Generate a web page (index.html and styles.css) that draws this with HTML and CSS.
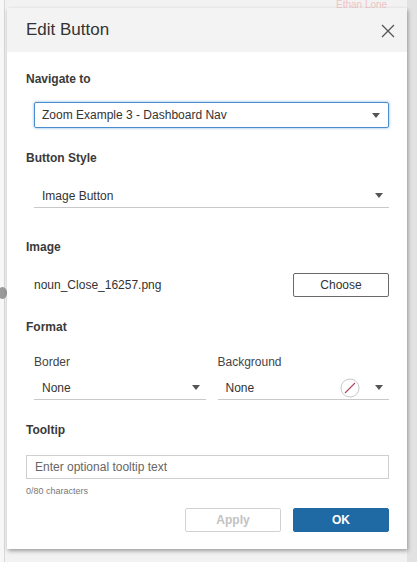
FILE: index.html
```html
<!DOCTYPE html>
<html lang="en">
<head>
    <meta charset="UTF-8">
    <meta name="viewport" content="width=device-width, initial-scale=1.0">
    <title>Edit Button</title>
    <link rel="stylesheet" href="styles.css">
</head>
<body>

<div class="backdrop">
    <span class="behind-name">Ethan Lone</span>
    <span class="behind-knob"></span>
</div>

<div class="dialog">
    <div class="dialog-header">
        <h1>Edit Button</h1>
        <svg class="close" width="14" height="14" viewBox="0 0 14 14">
            <path d="M1 1 L13 13 M13 1 L1 13" stroke="#555" stroke-width="1.3" fill="none"/>
        </svg>
    </div>

    <div class="dialog-body">
        <div class="label label-first">Navigate to</div>
        <div class="select boxed">
            <span>Zoom Example 3 - Dashboard Nav</span>
            <span class="caret"></span>
        </div>

        <div class="label">Button Style</div>
        <div class="select lined indent">
            <span>Image Button</span>
            <span class="caret"></span>
        </div>

        <div class="label label-image">Image</div>
        <div class="image-row">
            <span>noun_Close_16257.png</span>
            <button class="btn btn-outline">Choose</button>
        </div>

        <div class="label">Format</div>
        <div class="format-row">
            <div class="format-col">
                <div class="sublabel">Border</div>
                <div class="select lined">
                    <span>None</span>
                    <span class="caret"></span>
                </div>
            </div>
            <div class="format-col">
                <div class="sublabel">Background</div>
                <div class="select lined">
                    <span>None</span>
                    <span class="swatch">
                        <svg width="20" height="20" viewBox="0 0 20 20">
                            <circle cx="10" cy="10" r="9" fill="#fff" stroke="#c8c8c8" stroke-width="1"/>
                            <path d="M5 15 L15 5" stroke="#b0455a" stroke-width="1.1"/>
                        </svg>
                    </span>
                    <span class="caret"></span>
                </div>
            </div>
        </div>

        <div class="label">Tooltip</div>
        <div class="input">Enter optional tooltip text</div>
        <div class="counter">0/80 characters</div>

        <div class="actions">
            <button class="btn btn-disabled">Apply</button>
            <button class="btn btn-primary">OK</button>
        </div>
    </div>
</div>

</body>
</html>
```

FILE: styles.css
```css
body {
    margin: 0;
    height: 562px;
    overflow: hidden;
    background: #ececec;
    font-family: Arial, "Liberation Sans", sans-serif;
    color: #333;
    position: relative;
}

.backdrop {
    position: absolute;
    left: 0;
    top: 0;
    width: 417px;
    height: 562px;
    background: linear-gradient(to right, #f7f7f7 0, #f7f7f7 4px, #d8d8d8 4px, #d8d8d8 5px, #f2f2f2 5px, #f2f2f2 407px, #e2e2e2 407px);
}

.behind-name {
    position: absolute;
    left: 336px;
    top: 0;
    font-size: 10px;
    line-height: 10px;
    color: #f1c4c4;
}

.behind-knob {
    position: absolute;
    left: -2px;
    top: 287px;
    width: 9px;
    height: 12px;
    border-radius: 50%;
    background: #9a9a9a;
}

.dialog {
    position: absolute;
    left: 7px;
    top: 8px;
    width: 400px;
    height: 541px;
    background: #fff;
    box-shadow: 1px 2px 4px rgba(0, 0, 0, 0.35);
}

.dialog-header {
    height: 44px;
    background: #f3f3f3;
    display: flex;
    align-items: center;
    justify-content: space-between;
    padding: 0 12px 0 19px;
}

h1 {
    margin: 0;
    font-size: 17px;
    font-weight: normal;
    color: #333;
}

.close {
    margin-top: 1px;
}

.dialog-body {
    padding: 0 18px 0 19px;
}

.label {
    font-size: 12px;
    line-height: 16px;
    font-weight: bold;
    color: #3a3a3a;
    margin-top: 22px;
}

.label-first {
    margin-top: 19px;
}

.label-image {
    margin-top: 31px;
}

.select {
    display: flex;
    align-items: center;
    font-size: 12px;
    color: #333;
    box-sizing: border-box;
}

.select span:first-child {
    flex: 1;
}

.boxed {
    margin: 15px 0 0 8px;
    height: 26px;
    padding: 0 8px 0 7px;
    border: 1px solid #4a8ed0;
    border-radius: 2px;
    box-shadow: 0 0 3px rgba(74, 142, 208, 0.7);
}

.lined {
    height: 24px;
    padding: 0 6px 0 8px;
    border-bottom: 1px solid #c9c9c9;
}

.indent {
    margin: 18px 0 0 8px;
}

.caret {
    width: 0;
    height: 0;
    border-left: 4px solid transparent;
    border-right: 4px solid transparent;
    border-top: 5px solid #555;
}

.swatch {
    display: flex;
    margin-right: 15px;
}

.image-row {
    margin: 18px 0 0 8px;
    display: flex;
    align-items: center;
    justify-content: space-between;
    font-size: 12px;
}

.btn {
    width: 96px;
    height: 24px;
    font-family: Arial, "Liberation Sans", sans-serif;
    font-size: 12px;
    border-radius: 2px;
    cursor: pointer;
}

.btn-outline {
    background: #fff;
    border: 1px solid #6a6a6a;
    color: #333;
}

.format-row {
    display: flex;
    gap: 12px;
    margin: 19px 0 0 8px;
}

.format-col {
    flex: 1;
}

.sublabel {
    font-size: 12px;
    line-height: 16px;
    color: #444;
    margin-bottom: 6px;
}

.input {
    margin-top: 17px;
    height: 24px;
    box-sizing: border-box;
    border: 1px solid #cfcfcf;
    padding: 0 8px;
    display: flex;
    align-items: center;
    font-size: 12px;
    color: #666;
}

.counter {
    margin-top: 6px;
    font-size: 9px;
    line-height: 12px;
    color: #777;
}

.actions {
    display: flex;
    justify-content: flex-end;
    gap: 12px;
    margin-top: 11px;
}

.btn-disabled {
    background: #fff;
    border: 1px solid #d2d2d2;
    color: #c2c2c2;
    font-weight: bold;
}

.btn-primary {
    background: #1f6aa5;
    border: 1px solid #1f6aa5;
    color: #fff;
    font-weight: bold;
}
```
